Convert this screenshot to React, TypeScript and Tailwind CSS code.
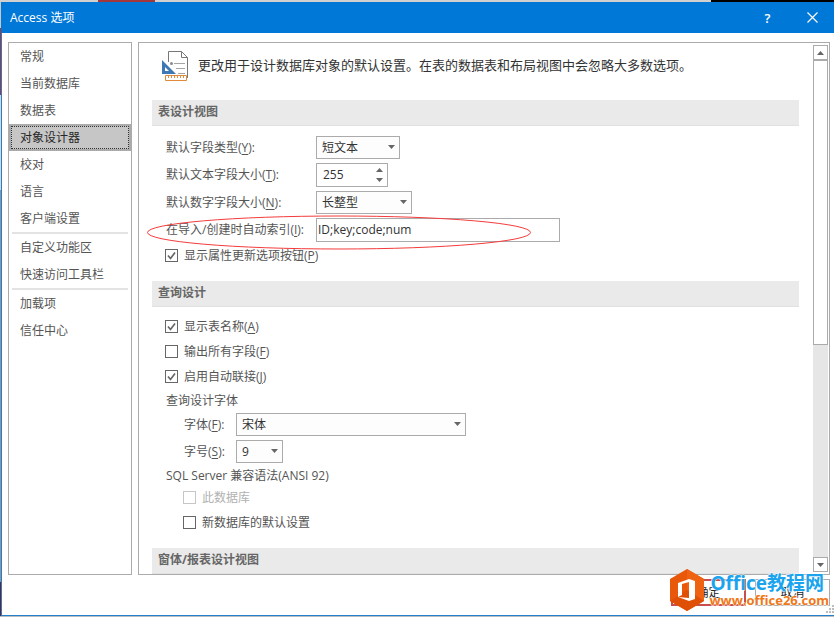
import type { ReactNode } from 'react';
import { clsx } from 'clsx';

const NAV_GROUPS = [
  ['常规', '当前数据库', '数据表', '对象设计器', '校对', '语言', '客户端设置'],
  ['自定义功能区', '快速访问工具栏'],
  ['加载项', '信任中心'],
];

// Text with an underlined access key, e.g. 字体(F)
function KeyText({ text, hotkey, colon }: { text: string; hotkey?: string; colon?: boolean }) {
  return (
    <span>
      {text}
      {hotkey && (
        <>
          (<span className="underline underline-offset-2">{hotkey}</span>)
        </>
      )}
      {colon && ':'}
    </span>
  );
}

function Arrow({ up, className }: { up?: boolean; className?: string }) {
  return (
    <svg className={clsx('h-1 w-[7px] shrink-0', className)} viewBox="0 0 7 4" fill="currentColor" aria-hidden="true">
      {up ? <path d="M0 4h7L3.5 0z" /> : <path d="M0 0h7L3.5 4z" />}
    </svg>
  );
}

function SelectBox({ id, value, className }: { id: string; value: string; className: string }) {
  return (
    <div className={clsx('relative h-[23px]', className)}>
      <select
        id={id}
        defaultValue={value}
        className="h-full w-full appearance-none border border-[#ababab] bg-[#fdfdfd] pl-[5px] text-[#333]"
      >
        <option>{value}</option>
      </select>
      <Arrow className="pointer-events-none absolute top-[9px] right-[5px] text-[#666]" />
    </div>
  );
}

function CheckRow({
  text,
  hotkey,
  checked,
  disabled,
}: {
  text: string;
  hotkey?: string;
  checked?: boolean;
  disabled?: boolean;
}) {
  return (
    <label className={clsx('flex h-[25px] items-center', disabled && 'text-[#b1b1b1]')}>
      <span className="relative mr-[6px] size-[13px] shrink-0">
        <input
          type="checkbox"
          defaultChecked={checked}
          disabled={disabled}
          className="peer block size-full appearance-none border border-[#666] bg-white disabled:border-[#c6c6c6]"
        />
        <svg
          className="pointer-events-none absolute inset-0 hidden size-full peer-checked:block"
          viewBox="0 0 13 13"
          fill="none"
          stroke="#666"
          strokeWidth="1.7"
          aria-hidden="true"
        >
          <path d="M3 6.5l2.5 3L10 3.5" />
        </svg>
      </span>
      <KeyText text={text} hotkey={hotkey} />
    </label>
  );
}

function SectionTitle({ children }: { children: ReactNode }) {
  return (
    <h2 className="mr-[14px] flex h-[26px] shrink-0 items-center border-b border-[#e1e1e1] bg-[#eaeaea] pl-[6px] pb-px font-bold text-[#666]">
      {children}
    </h2>
  );
}

function FieldRow({
  id,
  text,
  hotkey,
  labelClass = 'w-[151px]',
  children,
}: {
  id: string;
  text: string;
  hotkey: string;
  labelClass?: string;
  children: ReactNode;
}) {
  return (
    <div className="relative flex items-center">
      <label htmlFor={id} className={clsx('shrink-0 pl-px whitespace-nowrap', labelClass)}>
        <KeyText text={text} hotkey={hotkey} colon />
      </label>
      {children}
    </div>
  );
}

function DesignerIcon() {
  return (
    <svg className="h-8 w-7 shrink-0" viewBox="0 0 28 32" fill="none" aria-hidden="true">
      <path d="M7.5 12V1.5h13l6 6v20.500" stroke="#777" />
      <path d="M20.5 1.5v6h6" stroke="#777" />
      <path d="M13 13.5h11M15 18.5h9M17 23.5h7" stroke="#a5a5a5" />
      <circle cx="10.500" cy="13.500" r="1.500" fill="#8a8a8a" />
      <path d="M1 10v14h14zM4 17l4 4H4z" fill="#3f78b5" fillRule="evenodd" />
      <path d="M4.500 25.500h21v5h-21z" fill="#fff" stroke="#e08a3c" />
      <path d="M7.500 26v2M10.500 26v2M13.500 26v2M16.500 26v2M19.500 26v2M22.500 26v2" stroke="#e08a3c" />
    </svg>
  );
}

function Scrollbar() {
  const button = 'flex h-[15px] shrink-0 items-center justify-center border border-[#ababab] bg-white text-[#666]';
  return (
    <div className="mt-[2px] mb-[2px] mr-px flex w-[15px] shrink-0 flex-col bg-[#e6e6e6]">
      <button type="button" aria-label="向上滚动" className={button}>
        <Arrow up />
      </button>
      <div className="h-[54%] border border-[#ababab] bg-white" />
      <button type="button" aria-label="向下滚动" className={clsx(button, 'mt-auto')}>
        <Arrow />
      </button>
    </div>
  );
}

function Watermark() {
  return (
    <div className="pointer-events-none absolute right-[5px] bottom-[3px] flex items-center gap-1 whitespace-nowrap">
      <svg className="h-11 w-9 shrink-0" viewBox="0 0 36 44" aria-hidden="true">
        <path d="M18 1l17 10v22L18 43 1 33V11z" fill="#e9570a" />
        <path d="M18 1l17 10v22L18 22z" fill="#ee6212" />
        <path d="M18 22l17 11-17 10L1 33z" fill="#df4f06" />
        <path d="M9 15l11-4 6 2v18l-6 2-11-4 11 1V14l-7 2v11l-4 2z" fill="#fff" />
      </svg>
      <div className="font-bold [paint-order:stroke_fill] [-webkit-text-stroke:1px_white]">
        <div className="pl-px text-[19px] leading-[19px] text-[#1ba4ee]">Office教程网</div>
        <div className="text-[13px] leading-[14px] text-[#f07818]">www.office26.com</div>
      </div>
    </div>
  );
}

export default function App() {
  return (
    <div className="flex h-screen flex-col bg-[#b9bdc0] pb-px font-['Open_Sans','Noto_Sans_CJK_SC',sans-serif] text-[12px] leading-[16px] text-[#555]">
      {/* Slivers of the windows behind the dialog */}
      <div className="flex h-[2px] shrink-0 bg-[#d0d0d0]">
        <div className="ml-[98px] w-[57px] bg-[#a4373a]" />
        <div className="ml-auto w-[123px] bg-black" />
      </div>
      <div className="flex min-h-0 grow">
        <div className="flex w-px shrink-0 flex-col bg-[#8e9499]">
          <div className="h-[26px] bg-[#c8c8c8]" />
          <div className="h-[67px] bg-[#a4373a]" />
          <div className="h-[95px] bg-[#d8d8d8]" />
          <div className="mt-auto h-[34px] bg-[#6e2226]" />
        </div>
        <div className="relative flex min-w-0 grow flex-col border-b border-l border-[#2380cc] bg-white">
          <header className="-ml-px flex h-[31px] shrink-0 items-center bg-[#0078d7] pl-[9px] text-white">
            <h1 className="grow">Access 选项</h1>
            <button type="button" aria-label="帮助" className="w-[45px] text-[13px] font-semibold">
              ?
            </button>
            <button type="button" aria-label="关闭" className="flex w-[44px] justify-center">
              <svg className="size-[11px]" viewBox="0 0 11 11" stroke="#fff" strokeWidth="1.2" aria-hidden="true">
                <path d="M.5.5l10 10M10.500.5l-10 10" />
              </svg>
            </button>
          </header>

          <div className="flex min-h-0 grow gap-[6px] pt-[9px] pr-1 pl-[6px]">
            <nav className="w-[124px] shrink-0 border border-[#ababab]">
              {NAV_GROUPS.map((group, i) => (
                <div key={i} className={clsx(i > 0 && 'before:mx-[3px] before:block before:h-[2px] before:bg-[#e3e3e3]')}>
                  {group.map((item) => (
                    <button
                      key={item}
                      type="button"
                      className={clsx(
                        'block h-[27px] w-full border-2 pl-[9px] text-left',
                        item === '对象设计器'
                          ? 'border-[#ababab] bg-[#c6c6c6] text-[#262626] outline-1 -outline-offset-3 outline-dotted outline-[#333]'
                          : 'border-transparent'
                      )}
                    >
                      {item}
                    </button>
                  ))}
                </div>
              ))}
            </nav>

            <main className="flex min-w-0 grow border border-[#ababab]">
              <div className="min-w-0 grow overflow-hidden pl-[13px]">
                <div className="flex h-[57px] items-start gap-[9px] pt-[7px] pl-[9px]">
                  <DesignerIcon />
                  <p className="text-[13px] leading-[30px] whitespace-nowrap text-[#333]">
                    更改用于设计数据库对象的默认设置。在表的数据表和布局视图中会忽略大多数选项。
                  </p>
                </div>

                <SectionTitle>表设计视图</SectionTitle>
                <div className="mb-3 pt-[10px] pl-[13px]">
                  <div className="flex flex-col gap-1">
                    <FieldRow id="field-type" text="默认字段类型" hotkey="Y">
                      <SelectBox id="field-type" value="短文本" className="w-[84px]" />
                    </FieldRow>
                    <FieldRow id="text-size" text="默认文本字段大小" hotkey="T">
                      <div className="relative h-6 w-[72px]">
                        <input
                          id="text-size"
                          defaultValue="255"
                          className="h-full w-full border border-[#ababab] bg-white pl-[6px] pb-px text-[#333]"
                        />
                        <div className="absolute inset-y-[5px] right-[5px] flex flex-col justify-between text-[#666]">
                          <button type="button" aria-label="增加" className="block">
                            <Arrow up className="block" />
                          </button>
                          <button type="button" aria-label="减少" className="block">
                            <Arrow className="block" />
                          </button>
                        </div>
                      </div>
                    </FieldRow>
                    <FieldRow id="number-size" text="默认数字字段大小" hotkey="N">
                      <SelectBox id="number-size" value="长整型" className="w-24" />
                    </FieldRow>
                    <FieldRow id="auto-index" text="在导入/创建时自动索引" hotkey="I">
                      <input
                        id="auto-index"
                        defaultValue="ID;key;code;num"
                        className="h-6 w-[244px] border border-[#ababab] bg-white pl-px pb-[2px] text-[#333]"
                      />
                      {/* Hand-drawn highlight around the index field */}
                      <svg
                        className="pointer-events-none absolute -top-[3px] -left-[18px] h-[35px] w-[384px]"
                        viewBox="0 0 384 35"
                        fill="none"
                        aria-hidden="true"
                      >
                        <ellipse cx="192" cy="17.500" rx="191.500" ry="16.500" stroke="#f43b3b" />
                      </svg>
                    </FieldRow>
                  </div>
                  <div className="mt-px">
                    <CheckRow text="显示属性更新选项按钮" hotkey="P" checked />
                  </div>
                </div>

                <div className="pt-px">
                  <SectionTitle>查询设计</SectionTitle>
                </div>
                <div className="mb-[13px] pt-[7px] pl-[13px]">
                  <CheckRow text="显示表名称" hotkey="A" checked />
                  <CheckRow text="输出所有字段" hotkey="F" />
                  <CheckRow text="启用自动联接" hotkey="J" checked />
                  <p className="h-6 pl-px leading-6">查询设计字体</p>
                  <div className="flex flex-col gap-1 pl-[18px]">
                    <FieldRow id="font" text="字体" hotkey="F" labelClass="w-[53px]">
                      <SelectBox id="font" value="宋体" className="w-[230px]" />
                    </FieldRow>
                    <FieldRow id="font-size" text="字号" hotkey="S" labelClass="w-[53px]">
                      <SelectBox id="font-size" value="9" className="w-[47px]" />
                    </FieldRow>
                  </div>
                  <p className="h-[22px] pt-[5px] pl-px">SQL Server 兼容语法(ANSI 92)</p>
                  <div className="pl-[18px]">
                    <CheckRow text="此数据库" disabled />
                    <CheckRow text="新数据库的默认设置" />
                  </div>
                </div>

                <SectionTitle>窗体/报表设计视图</SectionTitle>
              </div>
              <Scrollbar />
            </main>
          </div>

          <footer className="flex h-10 shrink-0 justify-end gap-[9px] pt-1 pr-1">
            <button type="button" className="h-[27px] w-[75px] border-2 border-[#c94f4f] text-[#262626]">
              确定
            </button>
            <button type="button" className="h-[27px] w-[75px] border border-[#ababab] text-[#262626]">
              取消
            </button>
          </footer>

          {/* Resize grip */}
          <svg className="absolute right-0 bottom-[2px] size-2" viewBox="0 0 8 8" fill="#bdbdbd" aria-hidden="true">
            <path d="M6 0h2v2H6zM3 3h2v2H3zM6 3h2v2H6zM0 6h2v2H0zM3 6h2v2H3zM6 6h2v2H6z" />
          </svg>
          <Watermark />
        </div>
      </div>
    </div>
  );
}
